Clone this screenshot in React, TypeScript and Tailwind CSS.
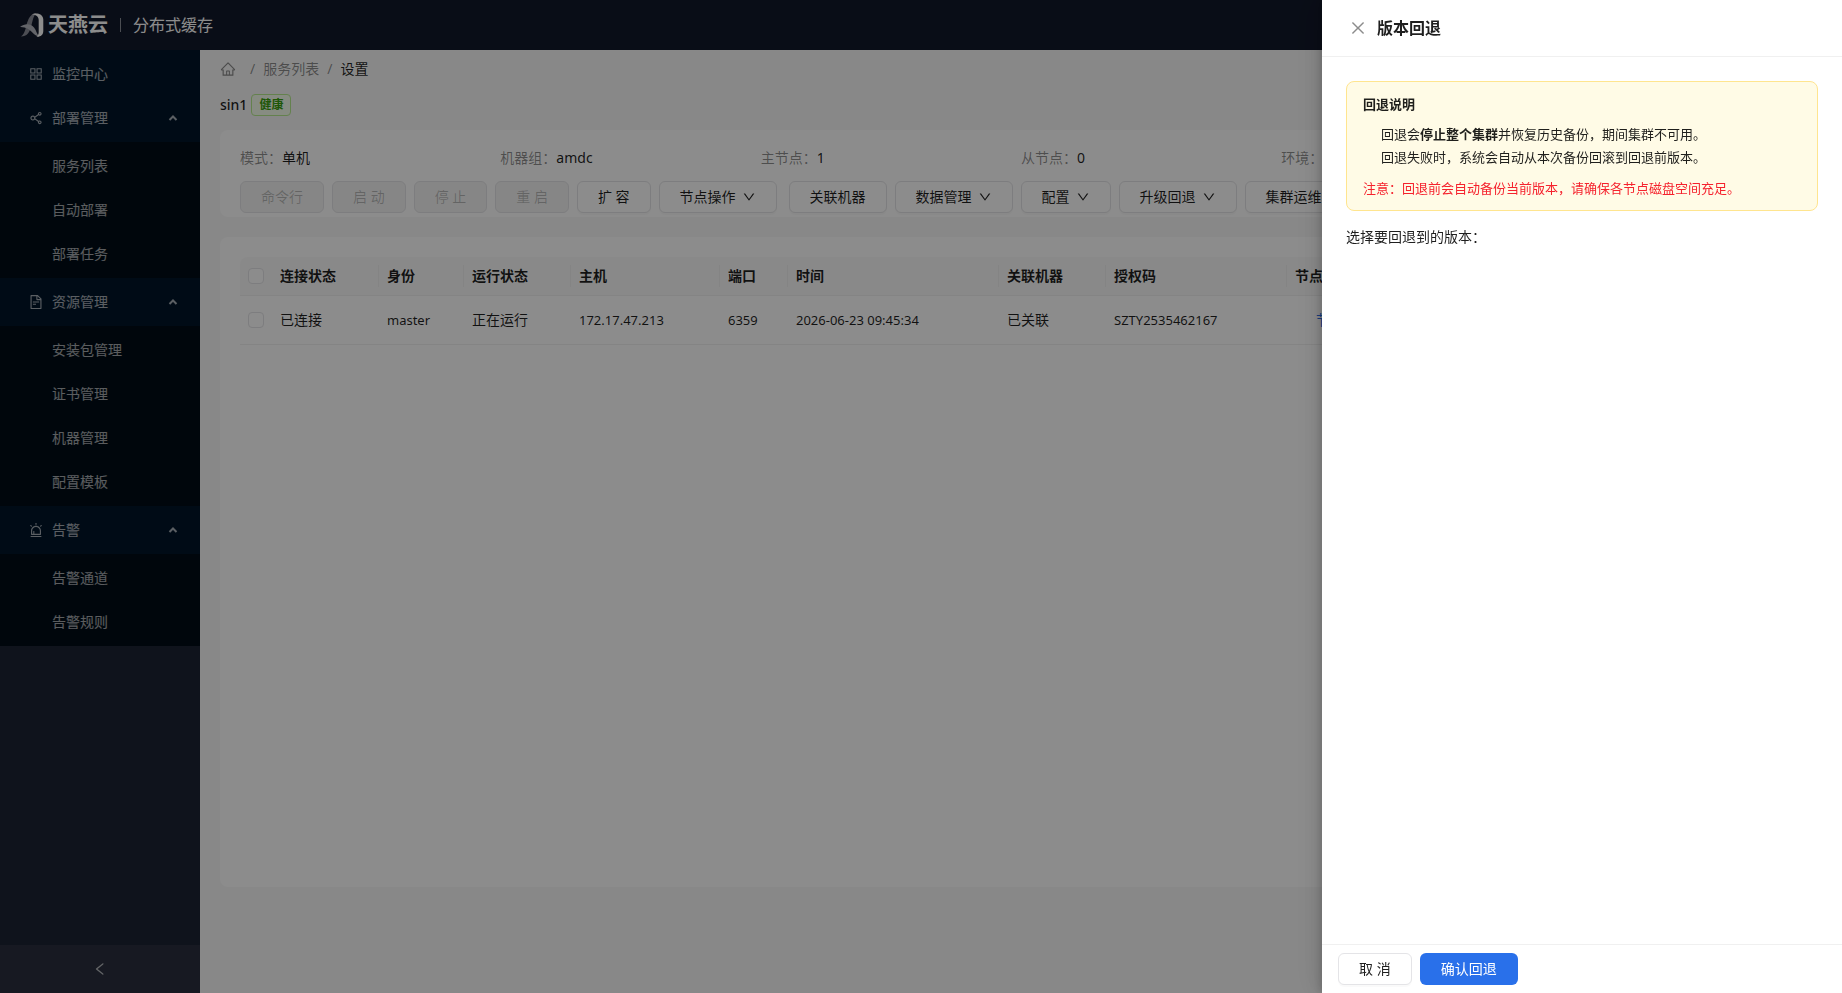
import type { ReactNode } from 'react';
import clsx from 'clsx';
import {
  AiOutlineAlert,
  AiOutlineAppstore,
  AiOutlineClose,
  AiOutlineDown,
  AiOutlineFileText,
  AiOutlineHome,
  AiOutlineLeft,
  AiOutlineShareAlt,
} from 'react-icons/ai';

interface MenuGroup {
  title: string;
  icon: ReactNode;
  items: string[];
}

const menuGroups: MenuGroup[] = [
  {
    title: '部署管理',
    icon: <AiOutlineShareAlt className="h-4 w-4" />,
    items: ['服务列表', '自动部署', '部署任务'],
  },
  {
    title: '资源管理',
    icon: <AiOutlineFileText className="h-4 w-4" />,
    items: ['安装包管理', '证书管理', '机器管理', '配置模板'],
  },
  {
    title: '告警',
    icon: <AiOutlineAlert className="h-4 w-4" />,
    items: ['告警通道', '告警规则'],
  },
];

const summary = [
  { label: '模式', value: '单机' },
  { label: '机器组', value: 'amdc' },
  { label: '主节点', value: '1' },
  { label: '从节点', value: '0' },
  { label: '环境', value: '默认' },
];

const columns = [
  { title: '连接状态', width: 'w-[107px]' },
  { title: '身份', width: 'w-[85px]' },
  { title: '运行状态', width: 'w-[107px]' },
  { title: '主机', width: 'w-[149px]' },
  { title: '端口', width: 'w-[68px]' },
  { title: '时间', width: 'w-[211px]' },
  { title: '关联机器', width: 'w-[107px]' },
  { title: '授权码', width: 'w-[181px]' },
  { title: '节点操作', width: '' },
];

const row = [
  '已连接',
  'master',
  '正在运行',
  '172.17.47.213',
  '6359',
  '2026-06-23 09:45:34',
  '已关联',
  'SZTY2535462167',
];

interface ActionButtonProps {
  children: ReactNode;
  disabled?: boolean;
  dropdown?: boolean;
}

const ActionButton = ({ children, disabled, dropdown }: ActionButtonProps) => (
  <button
    type="button"
    disabled={disabled}
    className={clsx(
      'flex h-8 shrink-0 items-center gap-1.5 whitespace-nowrap rounded-md border px-5',
      disabled
        ? 'border-[#e4e4e7] bg-[#f5f5f5] text-black/25'
        : 'border-[#e4e4e7] bg-white shadow-[0_2px_0_rgba(0,0,0,0.02)]'
    )}
  >
    {children}
    {dropdown && <AiOutlineDown className="h-3.5 w-3.5" />}
  </button>
);

const Logo = () => (
  <svg viewBox="0 0 24 24" className="h-6 w-6" aria-hidden="true">
    <path d="M1 23.5C6 20 5.500 13 8 7.500C9.500 3.500 12 .5 16.500 .3C13 3 12.800 8 11.300 13C9.500 19.500 7 23.500 1 23.500Z" fill="#8a8c98" />
    <path d="M0 14C5 10 10.500 10.500 14 14.500C16.500 17.500 16.500 21 19.500 23.500C12.500 23.500 11.500 13.500 0 14Z" fill="#b4b6bf" />
    <path
      d="M11.500 1.500C14.500-.3 23 -.5 23.300 6.500V18C23.300 22 20.500 24 16.500 23.700C18.300 22.500 18.700 21 18.700 18.500V7C18.500 3 15.500 1.500 11.500 1.500Z"
      fill="#ffffff"
    />
  </svg>
);

const Sidebar = () => (
  <aside className="flex w-[200px] shrink-0 flex-col bg-[#1d2433] text-white/65">
    <nav className="bg-[#001529]">
      <a href="#monitor" className="mt-1 flex h-10 items-center gap-2 pl-7">
        <AiOutlineAppstore className="h-4 w-4" />
        监控中心
      </a>
      {menuGroups.map((group) => (
        <div key={group.title}>
          <button
            type="button"
            className="flex h-12 w-full items-center gap-2 pl-7 pr-[22px] text-left"
          >
            {group.icon}
            <span className="flex-1">{group.title}</span>
            <svg viewBox="0 0 10 10" className="h-2.5 w-2.5" aria-hidden="true">
              <path d="M1.5 7L5 3.5L8.5 7" fill="none" stroke="currentColor" strokeWidth="2" />
            </svg>
          </button>
          <ul className="flex flex-col gap-1 bg-[#000c17] py-1">
            {group.items.map((item) => (
              <li key={item}>
                <a href="#menu" className="flex h-10 items-center pl-[52px]">
                  {item}
                </a>
              </li>
            ))}
          </ul>
        </div>
      ))}
    </nav>
    <button
      type="button"
      aria-label="收起菜单"
      className="mt-auto flex h-12 items-center justify-center bg-[#2a2f3e]"
    >
      <AiOutlineLeft className="h-4 w-4" />
    </button>
  </aside>
);

const NodeTable = () => (
  <table className="w-full table-fixed text-left">
    <thead>
      <tr className="h-[38px] border-b border-[#f0f0f0] bg-[#fafafa]">
        <th className="w-8 rounded-tl-lg pl-2">
          <input
            type="checkbox"
            aria-label="全选"
            className="block h-4 w-4 appearance-none rounded border border-[#e4e4e7] bg-white"
          />
        </th>
        {columns.map((column, index) => (
          <th key={column.title} className={clsx('py-0 font-semibold', column.width)}>
            <div
              className={clsx(
                'h-[22px] px-2 leading-[22px]',
                index < columns.length - 1 && 'border-r border-[#f0f0f0]'
              )}
            >
              {column.title}
            </div>
          </th>
        ))}
      </tr>
    </thead>
    <tbody>
      <tr className="h-[49px] border-b border-[#f0f0f0]">
        <td className="pl-2">
          <input
            type="checkbox"
            aria-label="选择节点"
            className="block h-4 w-4 appearance-none rounded border border-[#e4e4e7] bg-white"
          />
        </td>
        {row.map((cell) => (
          <td
            key={cell}
            className={clsx('whitespace-nowrap px-2', /^[\x20-\x7e]+$/.test(cell) && 'text-[13px]')}
          >
            {cell}
          </td>
        ))}
        <td className="pl-[29px]">
          <a href="#node" className="text-[#2970ea]">
            节点详情
          </a>
        </td>
      </tr>
    </tbody>
  </table>
);

const RollbackDrawer = () => (
  <section
    role="dialog"
    aria-labelledby="drawer-title"
    className="fixed inset-y-0 right-0 flex w-[520px] flex-col bg-white shadow-[-6px_0_16px_rgba(0,0,0,0.08),-3px_0_6px_rgba(0,0,0,0.12),-9px_0_28px_rgba(0,0,0,0.05)]"
  >
    <header className="flex h-[57px] shrink-0 items-center gap-2.5 border-b border-[#f0f0f0] px-[27px]">
      <button type="button" aria-label="关闭" className="text-black/45">
        <AiOutlineClose className="h-[18px] w-[18px]" />
      </button>
      <h2 id="drawer-title" className="text-base font-semibold">
        版本回退
      </h2>
    </header>

    <div className="flex-1 p-6">
      <div className="mb-[15px] rounded-lg border border-[#ffe58f] bg-[#fffbe6] px-4 py-[11px] text-[13px] leading-[22px]">
        <p className="mb-2 font-semibold">回退说明</p>
        <ul className="mb-2 pl-[18px] leading-[23px]">
          <li>
            回退会<strong className="font-semibold">停止整个集群</strong>并恢复历史备份，期间集群不可用。
          </li>
          <li>回退失败时，系统会自动从本次备份回滚到回退前版本。</li>
        </ul>
        <p className="text-[#f5222d]">
          注意：回退前会自动备份当前版本，请确保各节点磁盘空间充足。
        </p>
      </div>
      <p>选择要回退到的版本：</p>
    </div>

    <footer className="flex shrink-0 gap-2 border-t border-[#f0f0f0] px-4 py-2">
      <ActionButton>取 消</ActionButton>
      <button type="button" className="h-8 rounded-md bg-[#2970ea] px-[21px] text-white">
        确认回退
      </button>
    </footer>
  </section>
);

const App = () => {
  return (
    <div className="flex h-screen flex-col overflow-hidden bg-[#f8f8f8] font-['Noto_Sans','Noto_Sans_CJK_SC',sans-serif] text-sm leading-[22px] text-black/88">
      <header className="flex h-[50px] shrink-0 items-center bg-[#12182a] pl-5 text-white">
        <Logo />
        <span className="ml-1 text-xl font-bold">天燕云</span>
        <span className="mx-3 h-3.5 w-px bg-white/50" />
        <span className="text-base">分布式缓存</span>
      </header>

      <div className="flex min-h-0 flex-1">
        <Sidebar />
        <main className="min-w-0 flex-1 px-5 pt-2">
          <nav className="flex items-center gap-2 text-black/45">
            <AiOutlineHome className="mr-1.5 h-4 w-4" />
            <span>/</span>
            <a href="#services">服务列表</a>
            <span>/</span>
            <span className="text-black/88">设置</span>
          </nav>

          <div className="mt-3.5 flex items-center gap-1">
            <h1 className="text-sm font-medium">sin1</h1>
            <span className="h-[22px] rounded border border-[#b7eb8f] bg-[#f6ffed] px-[7px] text-xs leading-5 font-semibold text-[#389e0d]">
              健康
            </span>
          </div>

          <section className="mt-3.5 rounded-lg bg-white px-5 pt-[17px] pb-1">
            <dl className="grid grid-cols-6">
              {summary.map((item) => (
                <div key={item.label} className="flex">
                  <dt className="text-black/45">{item.label}：</dt>
                  <dd>{item.value}</dd>
                </div>
              ))}
            </dl>
            <div className="mt-3 flex gap-3">
              <div className="flex gap-2">
                <ActionButton disabled>命令行</ActionButton>
                <ActionButton disabled>启 动</ActionButton>
                <ActionButton disabled>停 止</ActionButton>
                <ActionButton disabled>重 启</ActionButton>
                <ActionButton>扩 容</ActionButton>
                <ActionButton dropdown>节点操作</ActionButton>
              </div>
              <div className="flex gap-2">
                <ActionButton>关联机器</ActionButton>
                <ActionButton dropdown>数据管理</ActionButton>
                <ActionButton dropdown>配置</ActionButton>
                <ActionButton dropdown>升级回退</ActionButton>
                <ActionButton dropdown>集群运维</ActionButton>
              </div>
            </div>
          </section>

          <section className="mt-5 min-h-[650px] rounded-lg bg-white p-5">
            <NodeTable />
          </section>
        </main>
      </div>

      <div className="fixed inset-0 bg-black/45" />
      <RollbackDrawer />
    </div>
  );
};

export default App;
